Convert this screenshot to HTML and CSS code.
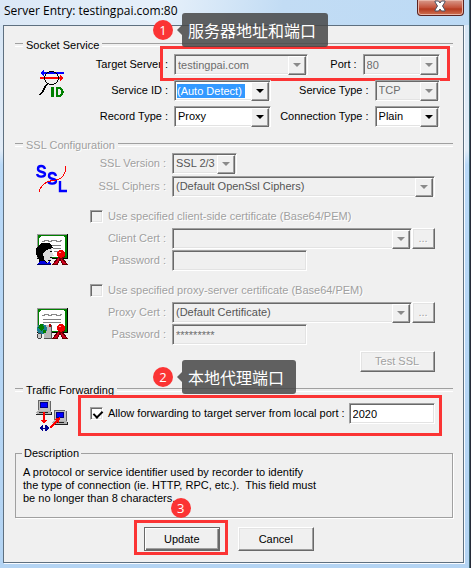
FILE: index.html
```html
<!DOCTYPE html>
<html lang="en">
<head>
<meta charset="utf-8">
<title>Server Entry</title>
<link rel="stylesheet" href="styles.css">
</head>
<body>
<main class="window">
  <header class="titlebar">
    <h1>Server Entry: testingpai.com:80</h1>
    <button class="close" type="button" aria-label="Close">
      <svg width="12" height="12" viewBox="0 0 12 12"><path d="M1 1h3.500l1.500 2 1.500-2H11v1L8.500 6l2.500 4v1H7.500L6 9l-1.500 2H1v-1l2.500-4L1 2z" fill="#fff" stroke="#4a4f60" stroke-width="1"/></svg>
    </button>
  </header>

  <form class="client">
    <section class="group socket">
      <h2 class="legend">Socket Service</h2>
      <div class="group-body">
        <svg class="icon" width="32" height="32" viewBox="0 0 32 32" shape-rendering="crispEdges">
          <path d="M6 6h22v2H6z" fill="#00f"/><path d="M4 7l4-3v6z" fill="#00f"/>
          <path d="M4 11h21v2H4z" fill="red"/><path d="M28 12l-4-3v6z" fill="red"/>
          <ellipse cx="15.500" cy="12" rx="7" ry="6.500" fill="none" stroke="#000"/>
          <path d="M12 17l-3 4-2 4-3 4" fill="none" stroke="#000" stroke-width="1.500"/>
          <path d="M15 21h3v10h-3zM20 21h4c5 1 5 9 0 10h-4zM22 23v6h1c3 0 3-6 0-6z" fill="#008000" fill-rule="evenodd"/>
        </svg>
        <div class="rows">
          <div class="row">
            <label class="name" for="target">Target Server :</label>
            <span class="combo off wide"><input id="target" value="testingpai.com" disabled></span>
            <label class="side" for="port">Port :</label>
            <span class="combo off port"><input id="port" value="80" disabled></span>
            <span class="highlight mark-target"></span>
            <span class="step step-target"><b>1</b><span class="tip" lang="zh">服务器地址和端口</span></span>
          </div>
          <div class="row">
            <label class="name" for="sid">Service ID :</label>
            <span class="combo mid"><input id="sid" class="selected" value="(Auto Detect)"></span>
            <label class="side" for="stype">Service Type :</label>
            <span class="combo off small"><select id="stype" disabled><option>TCP</option></select></span>
          </div>
          <div class="row">
            <label class="name" for="rtype">Record Type :</label>
            <span class="combo mid"><select id="rtype"><option>Proxy</option></select></span>
            <label class="side" for="ctype">Connection Type :</label>
            <span class="combo small"><select id="ctype"><option>Plain</option></select></span>
          </div>
        </div>
      </div>
    </section>

    <section class="group ssl">
      <h2 class="legend">SSL Configuration</h2>
      <div class="group-body">
        <svg class="icon" width="32" height="32" viewBox="0 0 32 32">
          <g fill="none" stroke="#00f" stroke-width="2.400">
            <path d="M9 6C8 2 2 2 2 6s7 2 7 5-7 4-8 0"/>
            <path d="M20 13c-1-4-7-4-7 0s7 2 7 5-7 4-8 0"/>
            <path d="M24 18v10h7"/>
          </g>
          <path d="M3 29c1-4 4-8 8-10s12-1 15-5c3-3 4-6 4-11" fill="none" stroke="red" shape-rendering="crispEdges"/>
        </svg>
        <div class="rows">
          <div class="row">
            <label class="name" for="ver">SSL Version :</label>
            <span class="combo off dark small"><select id="ver" disabled><option>SSL 2/3</option></select></span>
          </div>
          <div class="row">
            <label class="name" for="ciphers">SSL Ciphers :</label>
            <span class="combo off dark fill"><select id="ciphers" disabled><option>(Default OpenSsl Ciphers)</option></select></span>
          </div>
        </div>
      </div>

      <div class="group-body cert">
        <svg class="icon" width="32" height="32" viewBox="0 0 32 32" shape-rendering="crispEdges">
          <path d="M1 1h31v25H1z" fill="#000"/><path d="M1 1h30v24H1z" fill="#9a9a9a"/><path d="M2 2h29v23H2z" fill="#008000"/>
          <path d="M5 3h23l1 2v17l-2 2H5l-2-2V5z" fill="#fff"/>
          <path d="M6 8h2V7h4v1h3V7h5v1h4V7h2" fill="none" stroke="#888"/>
          <path d="M16 12.500h9M17 15.500h8M18 18.500h5" stroke="#808080"/>
          <path d="M23 24l-6 7h3l1 1 3-6zM25 24l6 7h-3l-1 1-3-6z" fill="#d00020" stroke="#600"/>
          <circle cx="25" cy="21" r="4" fill="#e00"/><path d="M22 24c2 2 5 2 7-1" stroke="#700" fill="none"/><path d="M23 19h2v1h-2z" fill="#f99"/>
          <path d="M3 12l3-2h7l3 2 1 3-4 2-4 5v4l2 4H4l-2-5-2-4v-5z" fill="#000"/>
          <path d="M10 17l6-2v4l2 4h-2v3l-3 1-1 4-4-4v-3l-1-3z" fill="#dcdcdc"/>
          <path d="M14 18h2v1h-2zM14 24h2v1h-2zM12 27h3v1h-3z" fill="#000"/>
          <path d="M2 31l2-3h4l3 2 3-2 1 3z" fill="#0000e0"/><path d="M1 31h14v1H1z" fill="#000060"/>
        </svg>
        <div class="rows">
          <label class="check"><input type="checkbox" disabled>Use specified client-side certificate (Base64/PEM)</label>
          <div class="row">
            <label class="name" for="ccert">Client Cert :</label>
            <span class="combo off fill"><select id="ccert" disabled><option></option></select></span>
            <button class="button browse" type="button" disabled>...</button>
          </div>
          <div class="row">
            <label class="name" for="cpass">Password :</label>
            <input class="field" id="cpass" disabled>
          </div>
        </div>
      </div>

      <div class="group-body cert">
        <svg class="icon" width="32" height="32" viewBox="0 0 32 32" shape-rendering="crispEdges">
          <path d="M1 1h31v25H1z" fill="#000"/><path d="M1 1h30v24H1z" fill="#9a9a9a"/><path d="M2 2h29v23H2z" fill="#008000"/>
          <path d="M5 3h23l1 2v17l-2 2H5l-2-2V5z" fill="#fff"/>
          <path d="M6 8h2V7h4v1h3V7h5v1h4V7h2" fill="none" stroke="#888"/>
          <path d="M7 12.500h18M7 15.500h18" stroke="#808080"/>
          <path d="M23 24l-6 7h3l1 1 3-6zM25 24l6 7h-3l-1 1-3-6z" fill="#d00020" stroke="#600"/>
          <circle cx="25" cy="21" r="4" fill="#e00"/><path d="M22 24c2 2 5 2 7-1" stroke="#700" fill="none"/><path d="M23 19h2v1h-2z" fill="#f99"/>
          <path d="M8 20l3-2h4v13H8z" fill="#b8b8b8"/><path d="M15 18v13H8" fill="none" stroke="#555"/><path d="M13 17h2v3h-2z" fill="#a00"/>
          <circle cx="6" cy="22" r="5" fill="#1a7d90"/><path d="M4 17h3l1 4-3 3-3-3zM7 23h3v3H7z" fill="#008000"/>
          <circle cx="3.500" cy="29" r="2.500" fill="#ccc" stroke="#444"/>
        </svg>
        <div class="rows">
          <label class="check"><input type="checkbox" disabled>Use specified proxy-server certificate (Base64/PEM)</label>
          <div class="row">
            <label class="name" for="pcert">Proxy Cert :</label>
            <span class="combo off dark fill"><select id="pcert" disabled><option>(Default Certificate)</option></select></span>
            <button class="button browse" type="button" disabled>...</button>
          </div>
          <div class="row">
            <label class="name" for="ppass">Password :</label>
            <input class="field" id="ppass" value="*********" disabled>
          </div>
        </div>
      </div>
      <div class="test"><button class="button" type="button" disabled>Test SSL</button></div>
    </section>

    <section class="group traffic">
      <h2 class="legend">Traffic Forwarding</h2>
      <div class="group-body">
        <svg class="icon" width="32" height="32" viewBox="0 0 32 32" shape-rendering="crispEdges">
          <g id="pc"><path d="M2 1h10l2 2v9H2z" fill="#c0c0c0"/><path d="M2 11V1h11M14 2v10H2" fill="none" stroke="#666"/><path d="M4 3h8v6H4z" fill="#000080"/><path d="M5 4h6v4H5z" fill="#00f"/><path d="M1 12h13l2 2v1H2l-2-1z" fill="#b0b0b0"/><path d="M0 15h15v-2M3 13h9" fill="none" stroke="#222"/></g>
          <use href="#pc" x="16" y="10"/>
          <path d="M8 13v10" stroke="red" stroke-width="2"/><path d="M5 21h6l-3 4z" fill="red"/>
          <path d="M14 29l8-8" stroke="red" stroke-width="2"/><path d="M24 18l-1 6-5-4z" fill="red"/>
          <path d="M3 29l3-3v6zM13 29l-3-3v6zM6 26h1v6H6zM9 26h1v6H9z" fill="#000090"/><path d="M4 29h8" stroke="#000090"/>
        </svg>
        <div class="rows">
          <div class="row">
            <label class="check"><input type="checkbox" checked>Allow forwarding to target server from local port :</label>
            <input class="field" aria-label="Local port" value="2020">
            <span class="highlight mark-port"></span>
            <span class="step step-port"><b>2</b><span class="tip" lang="zh">本地代理端口</span></span>
          </div>
        </div>
      </div>
    </section>

    <fieldset class="description">
      <legend>Description</legend>
      <p>A protocol or service identifier used by recorder to identify<br>the type of connection (ie. HTTP, RPC, etc.).&nbsp; This field must<br>be no longer than 8 characters.</p>
    </fieldset>

    <footer class="actions">
      <span class="target"><button class="button default" type="submit">Update</button><span class="highlight mark-update"></span><span class="step step-update"><b>3</b></span></span>
      <button class="button" type="button">Cancel</button>
    </footer>
  </form>
</main>
</body>
</html>
```
FILE: styles.css
```css
* { box-sizing: border-box; }

body {
  margin: 0;
  padding-right: 2px;
  min-height: 100vh;
  display: flex;
  background: #272b38;
  color: #000;
  font: 11px/13px "Liberation Sans", Arial, sans-serif;
}

input, select, button { font: inherit; color: inherit; margin: 0; border-radius: 0; }
input, select { min-width: 0; }
h1, h2, p { margin: 0; font-weight: normal; }

/* Window frame */
.window {
  flex: 1;
  display: flex;
  flex-direction: column;
  padding: 0 5px 5px 3px;
  border-right: 1px solid #3c6470;
  background: linear-gradient(#d5e5f5 0, #e2ecf7 150px, #b9d9f8 165px, #b4d4f3 100%);
}
.titlebar {
  display: flex;
  justify-content: space-between;
  align-items: flex-start;
  height: 25px;
  margin: 0 -5px 0 -3px;
  padding: 0 5px 0 4px;
  background: linear-gradient(100deg, #dbe8f6, #e6f0fa 35%, #c2dcf4 60%, #bcdaf5 100%);
}
h1 { font: 12px/22px "Open Sans", "Noto Sans", sans-serif; }
.close {
  width: 47px;
  height: 16px;
  padding: 0;
  border: 1px solid #5b2320;
  border-top: 0;
  border-radius: 0 0 4px 4px;
  background: linear-gradient(#d99a8c, #c4533c 50%, #b53a20 60%, #cf7454);
  box-shadow: inset 0 0 0 1px #e8b5a8;
}
.close svg { display: block; margin: 0 auto 4px; }
.client {
  flex: 1;
  padding: 12px 10px 4px 11px;
  border: 1px solid #5e7080;
  background: #f0f0f0;
  box-shadow: 1px 1px #f8fbff;
}

/* Groups */
.legend { display: flex; align-items: center; gap: 3px; font-size: 11px; line-height: 14px; }
.legend::before, .legend::after {
  content: "";
  width: 8px;
  height: 2px;
  border-top: 1px solid #a0a0a0;
  border-bottom: 1px solid #fff;
}
.legend::after { flex: 1; }
.group-body { display: flex; padding: 0 18px 0 21px; }
.icon { flex: none; margin-right: 22px; }
.rows { flex: 1; display: flex; flex-direction: column; }
.row { position: relative; display: flex; align-items: center; }
.name { width: 78px; margin-right: 6px; text-align: right; white-space: nowrap; }
.side { flex: 1; margin-right: 6px; text-align: right; white-space: nowrap; }

.socket .group-body { padding: 2px 13px 0 21px; }
.socket .rows { gap: 5px; }
.socket .icon { margin-top: 12px; }
.ssl { padding-top: 11px; color: #a0a0a0; text-shadow: 1px 1px #fff; }
.ssl .name { width: 76px; }
.ssl .rows { gap: 2px; }
.ssl .group-body { padding-top: 1px; }
.ssl .icon { margin-top: 10px; }
.ssl .cert { padding-top: 13px; }
.ssl .cert .rows { gap: 1px; }
.ssl .cert .icon { margin-top: 23px; margin-bottom: -8px; }
.cert .check { margin-bottom: 4px; }
.test { display: flex; justify-content: flex-end; padding: 6px 18px 0; }
.test .button { width: 75px; height: 21px; }
.traffic { padding-top: 11px; }
.traffic .icon { margin-top: 2px; }
.traffic .row { padding-top: 6px; gap: 4px; }
.traffic .field { width: 86px; margin-left: auto; }

/* Controls */
.combo, .field {
  height: 21px;
  border: 1px solid;
  border-color: #a0a0a0 #fff #fff #a0a0a0;
  background: #fff;
  box-shadow: inset 1px 1px #696969, inset -1px -1px #e3e3e3;
}
.combo { position: relative; display: flex; align-items: center; padding: 2px 18px 2px 2px; }
.combo input, .combo select {
  width: 100%;
  height: 14px;
  padding: 0 1px;
  border: 0;
  appearance: none;
  background: none;
  opacity: 1;
}
.combo::after {
  content: "";
  position: absolute;
  top: 1px;
  right: 1px;
  width: 16px;
  height: 17px;
  border: 1px solid;
  border-color: #fff #696969 #696969 #fff;
  background: #f0f0f0;
  box-shadow: inset -1px -1px #a0a0a0;
  pointer-events: none;
}
.combo::before {
  content: "";
  position: absolute;
  z-index: 1;
  top: 8px;
  right: 6px;
  border: 4px solid transparent;
  border-top-color: #000;
  border-bottom: 0;
  pointer-events: none;
}
.off, .field:disabled { background: #f0f0f0; color: #6d6d6d; text-shadow: none; }
.off::before { border-top-color: #8a8a8a; }
.dark { color: #555; }
.combo .selected { width: 68px; padding: 0; background: #39f; color: #fff; }
.wide { width: 134px; }
.port { width: 77px; }
.mid { width: 97px; }
.small { width: 65px; }
.fill { flex: 1; }
.field { width: 135px; padding: 1px 3px; }

.check { display: flex; align-items: center; gap: 5px; white-space: nowrap; }
.check input {
  appearance: none;
  width: 13px;
  height: 13px;
  border: 1px solid;
  border-color: #a0a0a0 #fff #fff #a0a0a0;
  background: #fff;
  box-shadow: inset 1px 1px #696969, inset -1px -1px #e3e3e3;
}
.check input:disabled { background: #f0f0f0; }
.check input:checked::after {
  content: "";
  display: block;
  width: 4px;
  height: 7px;
  margin: 1px 0 0 4px;
  border: solid #000;
  border-width: 0 2px 2px 0;
  transform: rotate(45deg);
}

.button {
  width: 76px;
  height: 24px;
  padding: 0;
  border: 1px solid;
  border-color: #fff #696969 #696969 #fff;
  background: #f0f0f0;
  box-shadow: inset -1px -1px #a0a0a0, inset 1px 1px #e3e3e3;
}
.button:disabled { color: #a0a0a0; text-shadow: 1px 1px #fff; }
.browse { width: 23px; height: 21px; }
.default { border-color: #696969; box-shadow: inset 1px 1px #fff, inset -1px -1px #696969, inset -2px -2px #a0a0a0; }

.description {
  margin: 16px 0 0;
  padding: 6px 8px 12px 7px;
  border: 1px solid #a0a0a0;
  box-shadow: 1px 1px #fff;
}
.description legend { padding: 0 2px; margin-left: -1px; }
.actions { display: flex; justify-content: center; gap: 18px; padding: 9px 10px 0 0; }
.target { position: relative; }

/* Annotations laid over the dialog */
.highlight { position: absolute; border: 3px solid #fb3434; pointer-events: none; }
.mark-target { inset: -8px -10px -6px 70px; }
.mark-port { inset: -2px -7px -12px -12px; }
.mark-update { inset: -7px -8px -4px -10px; }
.step { position: absolute; z-index: 2; display: flex; align-items: center; gap: 9px; }
.step b {
  width: 20px;
  height: 20px;
  border-radius: 50%;
  background: #fb3434;
  color: #fff;
  font: 13px/20px "Open Sans", sans-serif;
  text-align: center;
}
.tip {
  position: relative;
  padding: 0 12px 0 6px;
  border-radius: 3px;
  background: rgb(70 70 70 / 85%);
  color: #fff;
  font: 16px/34px "Noto Sans CJK SC", sans-serif;
  white-space: nowrap;
}
.tip::before {
  content: "";
  position: absolute;
  top: 12px;
  left: -5px;
  border: 5px solid transparent;
  border-right-color: rgb(70 70 70 / 85%);
  border-left: 0;
}
.step-target { left: 63px; top: -41px; }
.step-port { left: 63px; top: -37px; }
.step-update { left: 27px; top: -29px; }
```
